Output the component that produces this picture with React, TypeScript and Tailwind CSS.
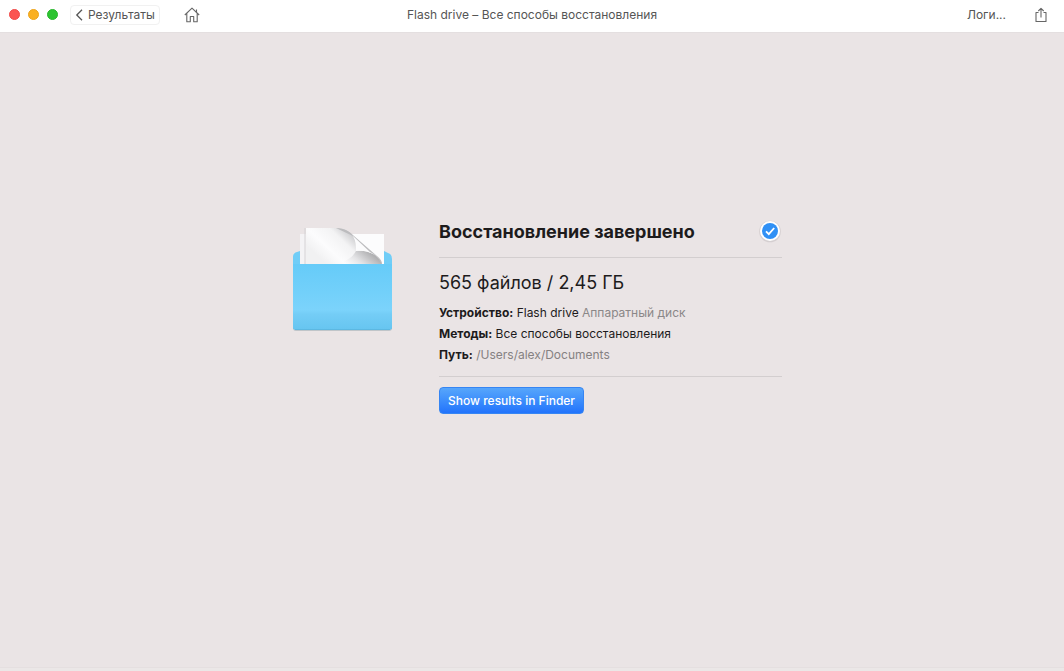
import React from "react";

function FolderIcon() {
  return (
    <svg viewBox="0 0 103 108" className="h-[108px] w-[103px] shrink-0" aria-hidden="true">
      <defs>
        <linearGradient id="front" x1="0" y1="0" x2="0" y2="1">
          <stop offset="0" stopColor="#66cbf8" />
          <stop offset="0.15" stopColor="#6acdf9" />
          <stop offset="0.7" stopColor="#7bd3fb" />
          <stop offset="0.76" stopColor="#74cdf6" />
          <stop offset="1" stopColor="#66c5f0" />
        </linearGradient>
        <linearGradient id="paper" gradientUnits="userSpaceOnUse" x1="36" y1="40" x2="66" y2="8">
          <stop offset="0" stopColor="#f1f1f2" />
          <stop offset="0.3" stopColor="#fcfcfd" />
          <stop offset="0.65" stopColor="#f3f3f4" />
          <stop offset="1" stopColor="#bebec1" />
        </linearGradient>
        <linearGradient id="curl" gradientUnits="userSpaceOnUse" x1="60" y1="44" x2="76" y2="24">
          <stop offset="0" stopColor="#f1f1f2" stopOpacity="0" />
          <stop offset="0.45" stopColor="#e3e3e5" />
          <stop offset="1" stopColor="#acacae" />
        </linearGradient>
      </defs>
      <path d="M2 104V32q0-4 4-5l3-1h84l4 2q4 1 4 6v70z" fill="#70cdf7" />
      <path d="M9 9h84v32H9z" fill="#fcfcfd" />
      <path d="M9 9h6v30H9z" fill="#f4f3f5" />
      <path d="M14 3v36" stroke="#d4d2d4" strokeWidth="1" />
      <path d="M15 3h30c9 0 14 4 17 8 3 5 3 10 3 15 14 0 22 4 26 13H15z" fill="url(#paper)" />
      <path d="M65 26c10-1 21 2 26 13H45c10-2 17-7 20-13" fill="url(#curl)" />
      <path d="M62 11c4 4 4 10 3 15 6-1 12 0 17 3z" fill="#fbfbfc" />
      <path d="M45 3c9 0 14 4 18 8l23 20q5 4 5 8-4-8-12-12L62 11" fill="#bcbcbe" />
      <path d="M2 40h99v63q0 3-3 3H5q-3 0-3-3z" fill="#9dabb2" opacity="0.55" />
      <path d="M2 39h99v63q0 3-3 3H5q-3 0-3-3z" fill="url(#front)" />
      <path d="M4 104.500h95" stroke="#5cb8e2" strokeWidth="1" />
    </svg>
  );
}

function Field({ label, children }: { label: string; children: React.ReactNode }) {
  return (
    <div>
      <dt className="inline font-bold">{label}:</dt> <dd className="inline">{children}</dd>
    </div>
  );
}

export default function App() {
  return (
    <div className="flex min-h-screen flex-col bg-[#eae4e5] font-['Inter','Noto_Sans',sans-serif] text-[#1d1b1c]">
      <header className="grid h-[33px] grid-cols-[1fr_auto_1fr] items-center border-b border-[#e4dfe0] bg-white pb-[3px] text-xs text-[#555]">
        <div className="flex items-center">
          <div className="flex gap-2 pl-[9px]">
            <button aria-label="Закрыть" className="size-[11px] rounded-full border border-[#f04a48] bg-[#fb5551]" />
            <button aria-label="Свернуть" className="size-[11px] rounded-full border border-[#eda41c] bg-[#fab022]" />
            <button aria-label="Развернуть" className="size-[11px] rounded-full border border-[#28b62c] bg-[#2dc431]" />
          </div>
          <button className="ml-3 flex h-5 items-center gap-[5px] rounded border border-[#f1f1f1] px-1">
            <svg viewBox="0 0 8 12" className="h-3 w-2" fill="none" stroke="#555" strokeWidth="1.3" aria-hidden="true">
              <path d="M7 .8 1.800 6 7 11.200" />
            </svg>
            Результаты
          </button>
          <button aria-label="Домой" className="ml-6">
            <svg viewBox="0 0 16 16" className="size-4" fill="none" stroke="#666" strokeWidth="1.1" strokeLinejoin="round" aria-hidden="true">
              <path d="M.8 8 8 1.200 15.200 8M12.500 5.200V2.500M2.800 6.500v8.300h3.500V9.500h3.400v5.300h3.500V6.500" />
            </svg>
          </button>
        </div>
        <h1>Flash drive – Все способы восстановления</h1>
        <div className="flex items-center justify-end gap-7 pr-4">
          <button>Логи...</button>
          <button aria-label="Поделиться">
            <svg viewBox="0 0 14 16" className="h-4 w-[14px]" fill="none" stroke="#666" strokeWidth="1.1" strokeLinejoin="round" aria-hidden="true">
              <path d="M4.500 5.500h-2.500v9h10v-9H9.500M7 10.500V1.500M4.300 4 7 1.300 9.700 4" />
            </svg>
          </button>
        </div>
      </header>

      <main className="flex flex-1 items-start justify-center gap-[45px] pt-[185px] pl-[9px]">
        <div className="pt-[7px]">
          <FolderIcon />
        </div>
        <section className="w-[343px]">
          <div className="flex h-10 items-start justify-between border-b border-[#d3cecf]">
            <h2 className="text-lg leading-7 font-bold">Восстановление завершено</h2>
            <svg viewBox="0 0 24 24" className="mt-px size-6" aria-hidden="true">
              <circle cx="12" cy="12.500" r="10.800" fill="#bdb5b7" opacity="0.45" />
              <circle cx="12" cy="12" r="10" fill="#fff" />
              <circle cx="12" cy="12" r="8" fill="#3090f5" />
              <path d="m8 12.300 2.800 2.900 5.400-6.200" fill="none" stroke="#fff" strokeWidth="1.800" />
            </svg>
          </div>
          <p className="mt-[11px] text-lg leading-7">565 файлов / 2,45 ГБ</p>
          <dl className="mt-[5px] border-b border-[#d3cecf] pb-[11px] text-xs leading-[21px]">
            <Field label="Устройство">
              Flash drive <span className="text-[#8b8788]">Аппаратный диск</span>
            </Field>
            <Field label="Методы">Все способы восстановления</Field>
            <Field label="Путь">
              <span className="text-[#858182]">/Users/alex/Documents</span>
            </Field>
          </dl>
          <button className="mt-2.5 h-[27px] rounded border border-[#3685f3] bg-linear-to-b from-[#57a6fb] to-[#2273fc] px-2 pt-px text-xs font-medium text-white">
            Show results in Finder
          </button>
        </section>
      </main>
      <footer className="h-1 border-t border-[#e5dfe0] bg-[#ebe7e7]" />
    </div>
  );
}
